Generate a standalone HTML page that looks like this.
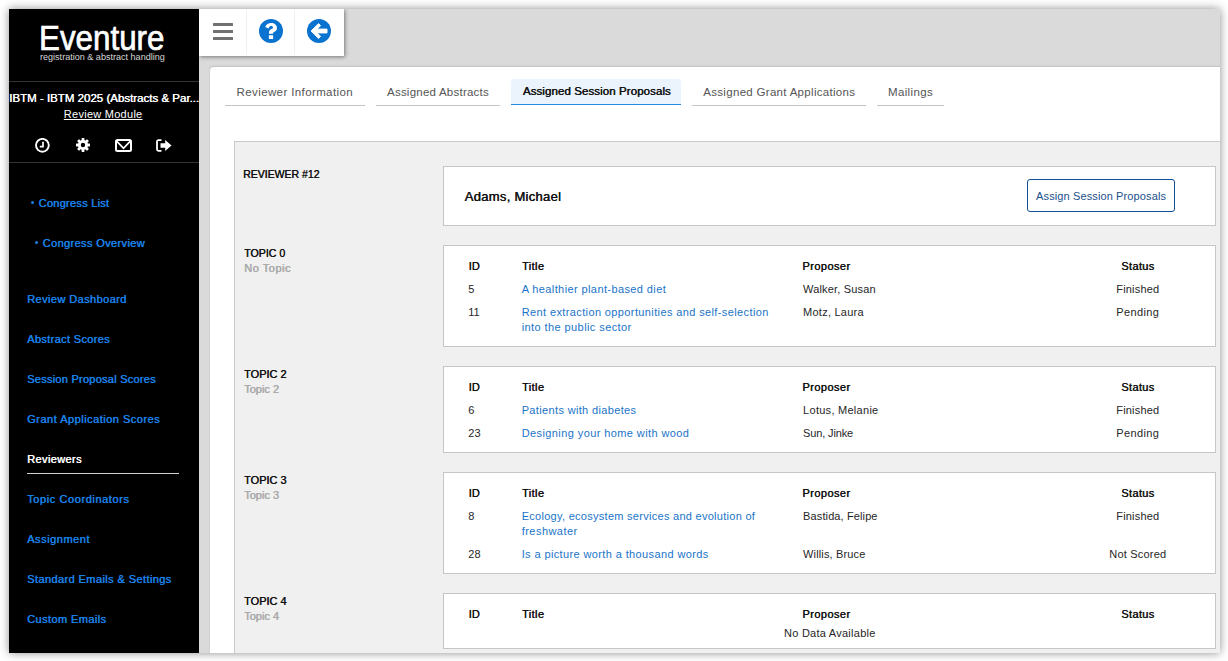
<!DOCTYPE html>
<html><head><meta charset="utf-8">
<style>
*{box-sizing:border-box;margin:0;padding:0}
html,body{width:1228px;height:661px;overflow:hidden;background:#fff;font-family:"Liberation Sans",sans-serif}
#frame{position:absolute;left:9px;top:9px;width:1211px;height:644px;overflow:hidden;background:#dadada;box-shadow:0 0 9px rgba(0,0,0,.45)}
#p{position:absolute;left:-9px;top:-9px;width:1228px;height:661px}
.a{position:absolute;white-space:pre;line-height:1}
.r{position:absolute}
.box{position:absolute;left:443px;width:773px;background:#fff;border:1px solid #c6c6c6}
</style></head><body>
<div id="frame"><div id="p">
  <!-- sidebar -->
  <div class="r" style="left:9px;top:9px;width:190px;height:644px;background:#000"></div>
  <div class="r" style="left:9px;top:81px;width:190px;height:1px;background:#333"></div>
  <div class="r" style="left:9px;top:162px;width:190px;height:1px;background:#333"></div>
  <div class="r" style="left:31px;top:201px;width:3px;height:3px;border-radius:50%;background:#1a80e6"></div>
  <div class="r" style="left:35px;top:241px;width:3px;height:3px;border-radius:50%;background:#1a80e6"></div>
  <div class="r" style="left:27px;top:472.5px;width:152px;height:1.5px;background:#d0d0d0"></div>
  <!-- sidebar icons -->
  <svg class="r" style="left:35px;top:138px" width="15" height="15" viewBox="0 0 15 15"><circle cx="7.4" cy="7.3" r="6.4" fill="none" stroke="#fff" stroke-width="1.9"/><path d="M8 3.8V8.6H4.8" fill="none" stroke="#fff" stroke-width="1.7"/></svg>
  <svg class="r" style="left:76px;top:138px" width="14" height="14" viewBox="0 0 14 14"><g fill="#fff"><circle cx="7" cy="7" r="5"/><rect x="5.6" y="0" width="2.8" height="14" rx=".5"/><rect x="0" y="5.6" width="14" height="2.8" rx=".5"/><rect x="5.6" y="0" width="2.8" height="14" rx=".5" transform="rotate(45 7 7)"/><rect x="5.6" y="0" width="2.8" height="14" rx=".5" transform="rotate(-45 7 7)"/></g><circle cx="7" cy="7" r="2.2" fill="#000"/></svg>
  <svg class="r" style="left:115px;top:139px" width="17" height="13" viewBox="0 0 17 13"><rect x="1" y="1" width="15" height="11" rx="1.5" fill="none" stroke="#fff" stroke-width="2"/><path d="M1.4 1.9L8.5 9.3L15.6 1.9" fill="none" stroke="#fff" stroke-width="1.7"/></svg>
  <svg class="r" style="left:156px;top:139px" width="16" height="13" viewBox="0 0 16 13"><path d="M5.5 1.2H2.5Q1 1.2 1 2.7V10.3Q1 11.8 2.5 11.8H5.5" fill="none" stroke="#fff" stroke-width="1.8"/><path d="M4.5 4.3H9.2V1L15.5 6.5L9.2 12V8.7H4.5Z" fill="#fff"/></svg>
  <!-- toolbar -->
  <div class="r" style="left:199px;top:9px;width:144.5px;height:46.5px;background:#fff;box-shadow:1px 1px 4px rgba(0,0,0,.45)"></div>
  <div class="r" style="left:246px;top:9px;width:1px;height:46px;background:#f0f0f0"></div>
  <div class="r" style="left:294px;top:9px;width:1px;height:46px;background:#f0f0f0"></div>
  <div class="r" style="left:213px;top:23px;width:20px;height:3px;background:#717171;border-radius:.5px"></div>
  <div class="r" style="left:213px;top:30px;width:20px;height:3px;background:#717171;border-radius:.5px"></div>
  <div class="r" style="left:213px;top:37px;width:20px;height:3px;background:#717171;border-radius:.5px"></div>
  <svg class="r" style="left:259px;top:19px" width="24" height="24" viewBox="0 0 24 24"><circle cx="12" cy="12" r="12" fill="#0a73cf"/><path d="M6.2 7.9C7.2 5.4 9.3 4 12.2 4C15.4 4 18 6.1 18 8.9C18 11.5 16.1 12.3 15 12.9C14.3 13.3 14.1 13.7 14.1 14.7L10 14.7L10 13.5C10 11.6 11 10.8 12.3 10.1C13.3 9.6 14 9.2 14 8.4C14 7.6 13.2 7 12.2 7C11.1 7 10.4 7.6 9.5 9.4Z" fill="#fff"/><rect x="9.9" y="16.2" width="4.2" height="3.8" fill="#fff"/></svg>
  <svg class="r" style="left:307px;top:19px" width="24" height="24" viewBox="0 0 24 24"><circle cx="12" cy="12" r="12" fill="#0a73cf"/><path d="M11.6 4.6L13.6 6.6L10.1 10.1H20V13.9H10.1L13.6 17.4L11.6 19.4L4.1 12Z" fill="#fff" stroke="#fff" stroke-width="1" stroke-linejoin="round"/></svg>
  <!-- card -->
  <div class="r" style="left:210px;top:67px;width:1100px;height:700px;background:#fff;border-radius:4px;box-shadow:0 -1px 2px rgba(0,0,0,.12)"></div>
  <div class="r" style="left:225px;top:105px;width:140px;height:1px;background:#c4c4c4"></div>
  <div class="r" style="left:376px;top:105px;width:124px;height:1px;background:#c4c4c4"></div>
  <div class="r" style="left:511px;top:79px;width:170px;height:25px;background:#ebf4fc;border-radius:4px 4px 0 0"></div><div class="r" style="left:511px;top:104px;width:170px;height:1px;background:#1e8ae0"></div>
  <div class="r" style="left:692px;top:105px;width:174px;height:1px;background:#c4c4c4"></div>
  <div class="r" style="left:877px;top:105px;width:67px;height:1px;background:#c4c4c4"></div>
  <!-- panel -->
  <div class="r" style="left:234px;top:141px;width:1100px;height:600px;background:#f0f0f0;border:1px solid #c9c9c9"></div>
  <div class="box" style="top:166px;height:60px"></div>
  <div class="box" style="top:245px;height:102px"></div>
<div class="box" style="top:366px;height:87px"></div>
<div class="box" style="top:472px;height:102px"></div>
<div class="box" style="top:593px;height:56px"></div>
  <div class="r" style="left:1027px;top:179px;width:148px;height:33px;border:1.2px solid #0d4f98;border-radius:3px"></div>
  <div class="a" style="left:38.50px;top:20px;font-size:35px;font-weight:400;color:#fff;letter-spacing:0.000px;transform:scaleX(0.8958);transform-origin:0 0;-webkit-text-stroke:.7px #fff">Eventure</div>
<div class="a" style="left:40.20px;top:52px;font-size:9.6px;font-weight:400;color:#d8d8d8;letter-spacing:0.000px;transform:scaleX(0.9436);transform-origin:0 0">registration &amp; abstract handling</div>
<div class="a" style="left:9.00px;top:93px;font-size:11.5px;font-weight:400;color:#fff;letter-spacing:0.005px;text-shadow:0.45px 0 0 #fff;">IBTM - IBTM 2025 (Abstracts &amp; Par...</div>
<div class="a" style="left:63.80px;top:109px;font-size:11px;font-weight:400;color:#fff;letter-spacing:0.269px;text-decoration:underline;text-underline-offset:1px">Review Module</div>
<div class="a" style="left:38.50px;top:198px;font-size:11px;font-weight:400;color:#1a80e6;letter-spacing:0.264px;text-shadow:0.45px 0 0 #1a80e6;">Congress List</div>
<div class="a" style="left:42.60px;top:238px;font-size:11px;font-weight:400;color:#1a80e6;letter-spacing:0.366px;text-shadow:0.45px 0 0 #1a80e6;">Congress Overview</div>
<div class="a" style="left:27.00px;top:294px;font-size:11px;font-weight:400;color:#1a80e6;letter-spacing:0.416px;text-shadow:0.45px 0 0 #1a80e6;">Review Dashboard</div>
<div class="a" style="left:27.00px;top:334px;font-size:11px;font-weight:400;color:#1a80e6;letter-spacing:0.351px;text-shadow:0.45px 0 0 #1a80e6;">Abstract Scores</div>
<div class="a" style="left:27.00px;top:374px;font-size:11px;font-weight:400;color:#1a80e6;letter-spacing:0.252px;text-shadow:0.45px 0 0 #1a80e6;">Session Proposal Scores</div>
<div class="a" style="left:27.00px;top:414px;font-size:11px;font-weight:400;color:#1a80e6;letter-spacing:0.497px;text-shadow:0.45px 0 0 #1a80e6;">Grant Application Scores</div>
<div class="a" style="left:27.00px;top:454px;font-size:11px;font-weight:400;color:#fff;letter-spacing:0.382px;text-shadow:0.45px 0 0 #fff;">Reviewers</div>
<div class="a" style="left:27.00px;top:494px;font-size:11px;font-weight:400;color:#1a80e6;letter-spacing:0.588px;text-shadow:0.45px 0 0 #1a80e6;">Topic Coordinators</div>
<div class="a" style="left:27.00px;top:534px;font-size:11px;font-weight:400;color:#1a80e6;letter-spacing:0.532px;text-shadow:0.45px 0 0 #1a80e6;">Assignment</div>
<div class="a" style="left:27.00px;top:574px;font-size:11px;font-weight:400;color:#1a80e6;letter-spacing:0.407px;text-shadow:0.45px 0 0 #1a80e6;">Standard Emails &amp; Settings</div>
<div class="a" style="left:27.00px;top:614px;font-size:11px;font-weight:400;color:#1a80e6;letter-spacing:0.410px;text-shadow:0.45px 0 0 #1a80e6;">Custom Emails</div>
<div class="a" style="left:236.60px;top:87px;font-size:11.5px;font-weight:400;color:#555;letter-spacing:0.387px;">Reviewer Information</div>
<div class="a" style="left:387.00px;top:87px;font-size:11.5px;font-weight:400;color:#555;letter-spacing:0.233px;">Assigned Abstracts</div>
<div class="a" style="left:522.70px;top:86px;font-size:11.5px;font-weight:400;color:#111;letter-spacing:0.087px;text-shadow:0.45px 0 0 #111;">Assigned Session Proposals</div>
<div class="a" style="left:703.30px;top:87px;font-size:11.5px;font-weight:400;color:#555;letter-spacing:0.302px;">Assigned Grant Applications</div>
<div class="a" style="left:888.00px;top:87px;font-size:11.5px;font-weight:400;color:#555;letter-spacing:0.352px;">Mailings</div>
<div class="a" style="left:243.00px;top:169px;font-size:11px;font-weight:400;color:#111;letter-spacing:0.000px;text-shadow:0.45px 0 0 #111;;transform:scaleX(0.9526);transform-origin:0 0">REVIEWER #12</div>
<div class="a" style="left:464.50px;top:190px;font-size:13px;font-weight:400;color:#111;letter-spacing:0.294px;text-shadow:0.45px 0 0 #111;">Adams, Michael</div>
<div class="a" style="left:1036.10px;top:191px;font-size:11px;font-weight:400;color:#1b4f8c;letter-spacing:0.117px;">Assign Session Proposals</div>
<div class="a" style="left:243.90px;top:248px;font-size:11px;font-weight:400;color:#111;letter-spacing:0.000px;text-shadow:0.45px 0 0 #111;;transform:scaleX(0.9649);transform-origin:0 0">TOPIC 0</div>
<div class="a" style="left:243.90px;top:263px;font-size:11px;font-weight:400;color:#a9a9a9;letter-spacing:0.549px;text-shadow:0.6px 0 0 #a9a9a9;">No Topic</div>
<div class="a" style="left:468.60px;top:261px;font-size:11px;font-weight:400;color:#111;letter-spacing:0.000px;text-shadow:0.45px 0 0 #111;">ID</div>
<div class="a" style="left:521.90px;top:261px;font-size:11px;font-weight:400;color:#111;letter-spacing:0.385px;text-shadow:0.45px 0 0 #111;">Title</div>
<div class="a" style="left:802.30px;top:261px;font-size:11px;font-weight:400;color:#111;letter-spacing:0.420px;text-shadow:0.45px 0 0 #111;">Proposer</div>
<div class="a" style="left:468.30px;top:284px;font-size:11px;font-weight:400;color:#262626;letter-spacing:0.000px;">5</div>
<div class="a" style="left:521.70px;top:284px;font-size:11px;font-weight:400;color:#1a74c8;letter-spacing:0.399px;">A healthier plant-based diet</div>
<div class="a" style="left:803.10px;top:284px;font-size:11px;font-weight:400;color:#262626;letter-spacing:0.160px;">Walker, Susan</div>
<div class="a" style="left:468.30px;top:307px;font-size:11px;font-weight:400;color:#262626;letter-spacing:0.000px;">11</div>
<div class="a" style="left:521.70px;top:307px;font-size:11px;font-weight:400;color:#1a74c8;letter-spacing:0.382px;">Rent extraction opportunities and self-selection</div>
<div class="a" style="left:521.70px;top:322px;font-size:11px;font-weight:400;color:#1a74c8;letter-spacing:0.414px;">into the public sector</div>
<div class="a" style="left:803.10px;top:307px;font-size:11px;font-weight:400;color:#262626;letter-spacing:0.237px;">Motz, Laura</div>
<div class="a" style="left:243.90px;top:369px;font-size:11px;font-weight:400;color:#111;letter-spacing:0.000px;text-shadow:0.45px 0 0 #111;">TOPIC 2</div>
<div class="a" style="left:243.90px;top:384px;font-size:11px;font-weight:400;color:#a9a9a9;letter-spacing:0.000px;text-shadow:0.6px 0 0 #a9a9a9;">Topic 2</div>
<div class="a" style="left:468.60px;top:382px;font-size:11px;font-weight:400;color:#111;letter-spacing:0.000px;text-shadow:0.45px 0 0 #111;">ID</div>
<div class="a" style="left:521.90px;top:382px;font-size:11px;font-weight:400;color:#111;letter-spacing:0.385px;text-shadow:0.45px 0 0 #111;">Title</div>
<div class="a" style="left:802.30px;top:382px;font-size:11px;font-weight:400;color:#111;letter-spacing:0.420px;text-shadow:0.45px 0 0 #111;">Proposer</div>
<div class="a" style="left:468.30px;top:405px;font-size:11px;font-weight:400;color:#262626;letter-spacing:0.000px;">6</div>
<div class="a" style="left:521.70px;top:405px;font-size:11px;font-weight:400;color:#1a74c8;letter-spacing:0.349px;">Patients with diabetes</div>
<div class="a" style="left:803.10px;top:405px;font-size:11px;font-weight:400;color:#262626;letter-spacing:0.275px;">Lotus, Melanie</div>
<div class="a" style="left:468.30px;top:428px;font-size:11px;font-weight:400;color:#262626;letter-spacing:0.000px;">23</div>
<div class="a" style="left:521.70px;top:428px;font-size:11px;font-weight:400;color:#1a74c8;letter-spacing:0.406px;">Designing your home with wood</div>
<div class="a" style="left:803.10px;top:428px;font-size:11px;font-weight:400;color:#262626;letter-spacing:-0.138px;">Sun, Jinke</div>
<div class="a" style="left:243.90px;top:475px;font-size:11px;font-weight:400;color:#111;letter-spacing:0.000px;text-shadow:0.45px 0 0 #111;">TOPIC 3</div>
<div class="a" style="left:243.90px;top:490px;font-size:11px;font-weight:400;color:#a9a9a9;letter-spacing:0.000px;text-shadow:0.6px 0 0 #a9a9a9;">Topic 3</div>
<div class="a" style="left:468.60px;top:488px;font-size:11px;font-weight:400;color:#111;letter-spacing:0.000px;text-shadow:0.45px 0 0 #111;">ID</div>
<div class="a" style="left:521.90px;top:488px;font-size:11px;font-weight:400;color:#111;letter-spacing:0.385px;text-shadow:0.45px 0 0 #111;">Title</div>
<div class="a" style="left:802.30px;top:488px;font-size:11px;font-weight:400;color:#111;letter-spacing:0.420px;text-shadow:0.45px 0 0 #111;">Proposer</div>
<div class="a" style="left:468.30px;top:511px;font-size:11px;font-weight:400;color:#262626;letter-spacing:0.000px;">8</div>
<div class="a" style="left:521.70px;top:511px;font-size:11px;font-weight:400;color:#1a74c8;letter-spacing:0.281px;">Ecology, ecosystem services and evolution of</div>
<div class="a" style="left:521.70px;top:526px;font-size:11px;font-weight:400;color:#1a74c8;letter-spacing:0.464px;">freshwater</div>
<div class="a" style="left:803.10px;top:511px;font-size:11px;font-weight:400;color:#262626;letter-spacing:0.116px;">Bastida, Felipe</div>
<div class="a" style="left:468.30px;top:549px;font-size:11px;font-weight:400;color:#262626;letter-spacing:0.000px;">28</div>
<div class="a" style="left:521.70px;top:549px;font-size:11px;font-weight:400;color:#1a74c8;letter-spacing:0.381px;">Is a picture worth a thousand words</div>
<div class="a" style="left:803.10px;top:549px;font-size:11px;font-weight:400;color:#262626;letter-spacing:0.137px;">Willis, Bruce</div>
<div class="a" style="left:243.90px;top:596px;font-size:11px;font-weight:400;color:#111;letter-spacing:0.000px;text-shadow:0.45px 0 0 #111;">TOPIC 4</div>
<div class="a" style="left:243.90px;top:611px;font-size:11px;font-weight:400;color:#a9a9a9;letter-spacing:0.000px;text-shadow:0.6px 0 0 #a9a9a9;">Topic 4</div>
<div class="a" style="left:468.60px;top:609px;font-size:11px;font-weight:400;color:#111;letter-spacing:0.000px;text-shadow:0.45px 0 0 #111;">ID</div>
<div class="a" style="left:521.90px;top:609px;font-size:11px;font-weight:400;color:#111;letter-spacing:0.385px;text-shadow:0.45px 0 0 #111;">Title</div>
<div class="a" style="left:802.30px;top:609px;font-size:11px;font-weight:400;color:#111;letter-spacing:0.420px;text-shadow:0.45px 0 0 #111;">Proposer</div>
<div class="a" style="left:1121.15px;top:261px;font-size:11px;font-weight:400;color:#111;letter-spacing:0.352px;text-shadow:0.45px 0 0 #111;">Status</div>
<div class="a" style="left:1116.30px;top:284px;font-size:11px;font-weight:400;color:#262626;letter-spacing:0.178px;">Finished</div>
<div class="a" style="left:1116.30px;top:307px;font-size:11px;font-weight:400;color:#262626;letter-spacing:0.375px;">Pending</div>
<div class="a" style="left:1121.15px;top:382px;font-size:11px;font-weight:400;color:#111;letter-spacing:0.352px;text-shadow:0.45px 0 0 #111;">Status</div>
<div class="a" style="left:1116.30px;top:405px;font-size:11px;font-weight:400;color:#262626;letter-spacing:0.178px;">Finished</div>
<div class="a" style="left:1116.30px;top:428px;font-size:11px;font-weight:400;color:#262626;letter-spacing:0.375px;">Pending</div>
<div class="a" style="left:1121.15px;top:488px;font-size:11px;font-weight:400;color:#111;letter-spacing:0.352px;text-shadow:0.45px 0 0 #111;">Status</div>
<div class="a" style="left:1116.30px;top:511px;font-size:11px;font-weight:400;color:#262626;letter-spacing:0.178px;">Finished</div>
<div class="a" style="left:1109.30px;top:549px;font-size:11px;font-weight:400;color:#262626;letter-spacing:0.197px;">Not Scored</div>
<div class="a" style="left:1121.15px;top:609px;font-size:11px;font-weight:400;color:#111;letter-spacing:0.352px;text-shadow:0.45px 0 0 #111;">Status</div>
<div class="a" style="left:784.00px;top:628px;font-size:11px;font-weight:400;color:#262626;letter-spacing:0.256px;">No Data Available</div>
</div></div>
</body></html>
